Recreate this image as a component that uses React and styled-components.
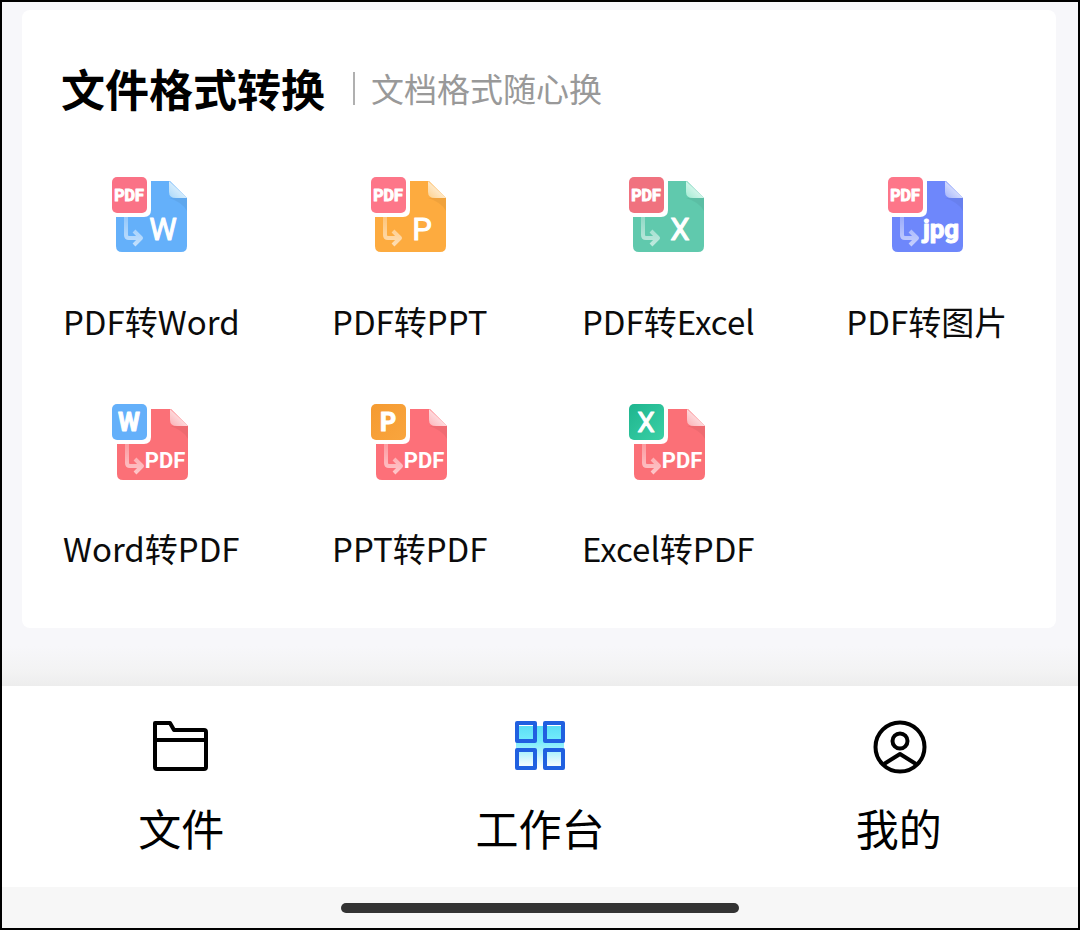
import React, { useId } from "react";
import styled, { createGlobalStyle } from "styled-components";

const GlobalStyle = createGlobalStyle`
  *, *::before, *::after { box-sizing: border-box; }
  body {
    margin: 0;
    background: #f7f7fa;
    color: #0b0b0b;
    font-family: "Noto Sans CJK SC", sans-serif;
  }
`;

const Screen = styled.div`
  display: flex;
  flex-direction: column;
  min-height: 100vh;
  border: 2px solid #000;
  background: #f7f7fa;
`;

const Content = styled.main`
  flex: 1;
  padding: 8px 22px 57px 20px;
  background: linear-gradient(to top, #ededed 0, #f3f3f4 16px, #f7f7fa 40px);
`;

const Card = styled.section`
  padding: 46px 0 56px;
  border-radius: 8px;
  background: #fff;
`;

const CardHeader = styled.header`
  display: flex;
  align-items: center;
  height: 64px;
  padding-left: 39px;
`;

const Title = styled.h1`
  margin: 0;
  font-size: 44px;
  font-weight: 700;
  line-height: 64px;
  color: #000;
`;

const Subtitle = styled.p`
  display: flex;
  align-items: center;
  gap: 16px;
  margin: 0 0 0 28px;
  font-size: 33px;
  line-height: 48px;
  color: #999;

  &::before {
    content: "";
    width: 2px;
    height: 33px;
    background: #b0b0b0;
  }
`;

const ToolGrid = styled.div`
  display: grid;
  grid-template-columns: repeat(4, 1fr);
  row-gap: 42px;
  padding-top: 40px;
`;

const Tool = styled.button`
  display: flex;
  flex-direction: column;
  align-items: center;
  gap: 25px;
  padding: 0;
  border: 0;
  background: none;
  color: inherit;
  font: inherit;
  font-size: 33px;
  line-height: 48px;
  white-space: nowrap;
  cursor: pointer;
`;

const ToolSvg = styled.svg`
  display: block;
  width: 120px;
  height: 112px;
`;

const TabBar = styled.nav`
  display: grid;
  grid-template-columns: repeat(3, 1fr);
  padding: 32px 0 28px;
  background: #fff;
`;

const Tab = styled.button`
  display: flex;
  flex-direction: column;
  align-items: center;
  gap: 20px;
  padding: 0;
  border: 0;
  background: none;
  color: #000;
  font: inherit;
  font-size: 43px;
  line-height: 64px;
  cursor: pointer;
`;

const TabSvg = styled.svg`
  display: block;
  width: 60px;
  height: 57px;
`;

const HomeArea = styled.footer`
  display: flex;
  justify-content: center;
  padding: 16px 0 15px;
  background: #f7f7f7;
`;

const HomeIndicator = styled.div`
  width: 37%;
  height: 10px;
  border-radius: 5px;
  background: #333;
`;

const IconText = styled.text`
  font-family: Roboto, sans-serif;
  font-size: ${(p) => p.$size}px;
  font-weight: ${(p) => p.$weight || 700};
  fill: #fff;
  stroke: #fff;
  stroke-width: ${(p) => p.$stroke || 0};
  stroke-linejoin: round;
  text-anchor: middle;
`;

function ConvertIcon({ body, fold, badge, badgeEnd, from, to, toPdf }) {
  const id = useId();
  return (
    <ToolSvg viewBox="0 0 120 112" aria-hidden="true">
      <defs>
        <linearGradient id={`${id}f`} x1="0" y1="1" x2="1" y2="0">
          <stop offset="0" stopColor={fold} />
          <stop offset="1" stopColor="#fff" />
        </linearGradient>
        <linearGradient id={`${id}b`} x1="0" y1="0" x2="1" y2="1">
          <stop offset="0" stopColor={badge} />
          <stop offset="1" stopColor={badgeEnd || badge} />
        </linearGradient>
        <linearGradient id={`${id}a`} x1="0" y1="0" x2="0" y2="1">
          <stop offset="0" stopColor="#fff" stopOpacity="0.3" />
          <stop offset="1" stopColor="#fff" stopOpacity="0.6" />
        </linearGradient>
      </defs>
      <g transform={toPdf ? "translate(1 1)" : undefined}>
        <path d="M30 21H79L96 38V86Q96 92 90 92H31Q25 92 25 86V26Q25 21 30 21Z" fill={body} />
        <path d="M78 38L96 38V51Q91 42 78 38Z" fill="#000" opacity="0.05" />
        <path d="M78 21L96 38H85Q78 38 78 32Z" fill={`url(#${id}f)`} />
        <path
          d="M35 56V75Q35 78 38 78H49M43 71L50 78L43 85"
          fill="none"
          stroke={`url(#${id}a)`}
          strokeWidth="4"
          strokeLinejoin="round"
        />
      </g>
      <path d="M18 14H60V50Q60 57 53 57H18Z" fill="#fff" />
      <rect x="21" y="17" width="35" height="36" rx="5" fill={`url(#${id}b)`} />
      {toPdf ? (
        <>
          <IconText
            x="38"
            y={from === "X" ? 45 : 44}
            $size={from === "X" ? 28 : 25}
            $weight={from === "X" ? 400 : 700}
            $stroke={1}
          >
            {from}
          </IconText>
          <IconText x="74" y="81" $size={22}>{to}</IconText>
        </>
      ) : (
        <>
          <IconText x="38" y="41" $size={16} $stroke={1}>{from}</IconText>
          <IconText
            x={to === "jpg" ? 74 : 72}
            y={to === "jpg" ? 78 : 80}
            $size={to === "jpg" ? 26 : 31}
            $weight={to === "jpg" ? 700 : 400}
            $stroke={1}
          >
            {to}
          </IconText>
        </>
      )}
    </ToolSvg>
  );
}

const tools = [
  { label: "PDF转Word", from: "PDF", to: "W", body: "#64b0fa", fold: "#a9d8f9", badge: "#fa7286" },
  { label: "PDF转PPT", from: "PDF", to: "P", body: "#fdab3f", fold: "#fdd18e", badge: "#fd7689" },
  { label: "PDF转Excel", from: "PDF", to: "X", body: "#60c9ad", fold: "#a2ecd3", badge: "#f0727f" },
  { label: "PDF转图片", from: "PDF", to: "jpg", body: "#6e87fb", fold: "#a5b5fb", badge: "#fd7689" },
  { label: "Word转PDF", from: "W", to: "PDF", toPdf: true, body: "#fb7077", fold: "#fbb0b5", badge: "#64b0fa" },
  { label: "PPT转PDF", from: "P", to: "PDF", toPdf: true, body: "#fd7079", fold: "#fdb4ba", badge: "#f59b31", badgeEnd: "#f9a53e" },
  { label: "Excel转PDF", from: "X", to: "PDF", toPdf: true, body: "#fb7077", fold: "#fbb0b5", badge: "#1eb58f", badgeEnd: "#3bd0a5" },
];

function FolderIcon() {
  return (
    <TabSvg viewBox="0 0 60 57" fill="none" stroke="#000" strokeWidth="4" strokeLinejoin="round" aria-hidden="true">
      <path d="M4 5H19L23 12H53Q55 12 55 14V49Q55 51 53 51H6Q4 51 4 49ZM4 22H55" />
    </TabSvg>
  );
}

function WorkbenchIcon() {
  return (
    <TabSvg viewBox="0 0 60 57" aria-hidden="true">
      <defs>
        <linearGradient id="workbench-glow" x1="0" y1="0" x2="0" y2="1">
          <stop offset="0" stopColor="#5cdff6" />
          <stop offset="0.35" stopColor="#74ecfb" />
          <stop offset="0.8" stopColor="#d8f7fe" />
          <stop offset="1" stopColor="#fff" />
        </linearGradient>
      </defs>
      <rect x="6" y="8" width="48" height="42" fill="url(#workbench-glow)" />
      <g fill="none" stroke="#2060e0" strokeWidth="4" strokeLinejoin="round">
        <rect x="7" y="5" width="18" height="18" />
        <rect x="35" y="5" width="18" height="18" />
        <rect x="7" y="32" width="18" height="18" />
        <rect x="35" y="32" width="18" height="18" />
      </g>
    </TabSvg>
  );
}

function ProfileIcon() {
  return (
    <TabSvg viewBox="0 0 60 57" fill="none" stroke="#000" strokeWidth="4" aria-hidden="true">
      <circle cx="31" cy="29" r="24.5" />
      <circle cx="31" cy="23" r="7.5" />
      <path d="M15 46L31 36L47 46" strokeLinejoin="round" />
    </TabSvg>
  );
}

const tabs = [
  { label: "文件", Icon: FolderIcon },
  { label: "工作台", Icon: WorkbenchIcon, current: true },
  { label: "我的", Icon: ProfileIcon },
];

export default function App() {
  return (
    <>
      <GlobalStyle />
      <Screen>
        <Content>
          <Card>
            <CardHeader>
              <Title>文件格式转换</Title>
              <Subtitle>文档格式随心换</Subtitle>
            </CardHeader>
            <ToolGrid>
              {tools.map(({ label, ...icon }) => (
                <Tool key={label} type="button">
                  <ConvertIcon {...icon} />
                  {label}
                </Tool>
              ))}
            </ToolGrid>
          </Card>
        </Content>
        <TabBar>
          {tabs.map(({ label, Icon, current }) => (
            <Tab key={label} type="button" aria-current={current ? "page" : undefined}>
              <Icon />
              {label}
            </Tab>
          ))}
        </TabBar>
        <HomeArea>
          <HomeIndicator />
        </HomeArea>
      </Screen>
    </>
  );
}
